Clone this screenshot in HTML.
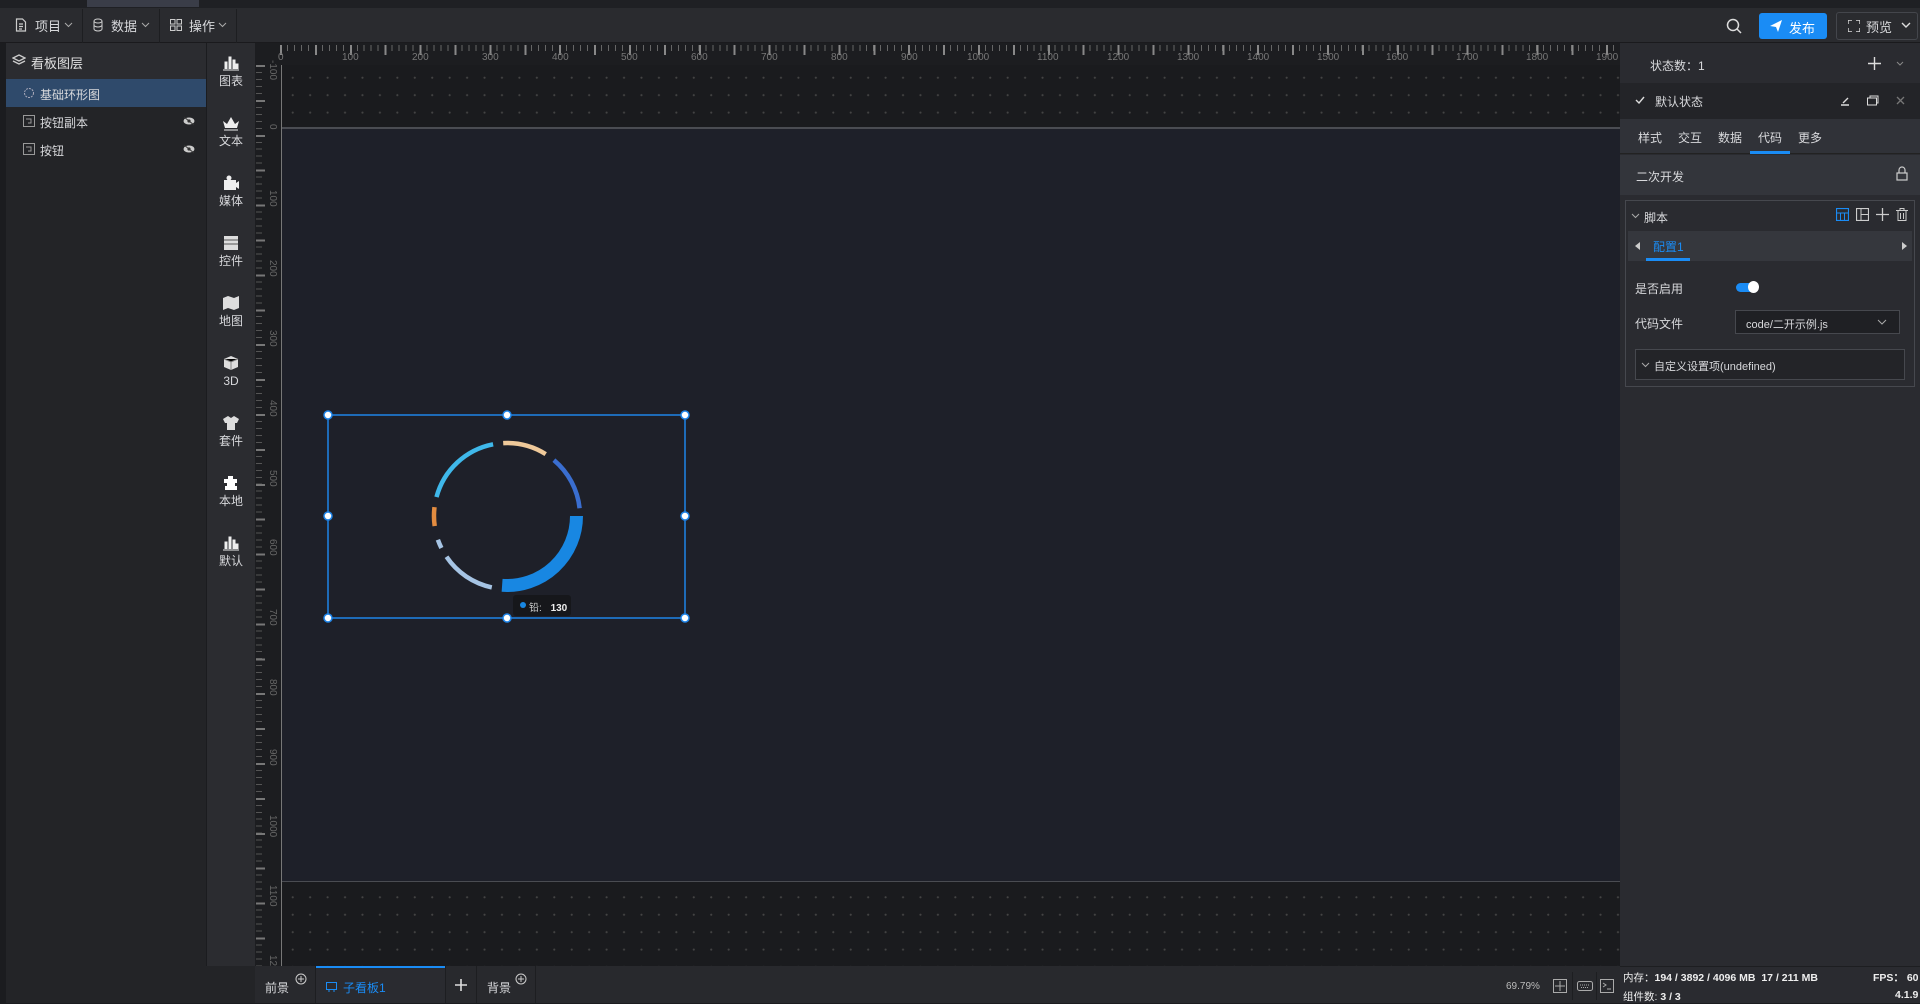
<!DOCTYPE html>
<html><head><meta charset="utf-8"><style>
*{margin:0;padding:0;box-sizing:border-box}
body{width:1920px;height:1003px;background:#1b1c1f;font-family:"Liberation Sans","Noto Sans CJK SC",sans-serif;color:#d8d9dc;font-size:12px;position:relative;overflow:hidden}
.a{position:absolute}
.t{white-space:nowrap}
.vl{position:absolute;left:263px;font-size:10px;color:#666;transform:rotate(90deg);transform-origin:left top;white-space:nowrap}
</style></head><body>
<div class="a" style="left:0;top:0;width:1920px;height:8px;background:#1f2024"></div>
<div class="a" style="left:87px;top:0;width:112px;height:7px;background:#3a3d48"></div>
<div class="a" style="left:0;top:8px;width:1920px;height:35px;background:#2a2b2f;border-bottom:1px solid #1a1a1d"></div>
<div class="a" style="left:82px;top:9px;width:1px;height:34px;background:#1d1e21"></div>
<div class="a" style="left:159px;top:9px;width:1px;height:34px;background:#1d1e21"></div>
<div class="a" style="left:236px;top:9px;width:1px;height:34px;background:#1d1e21"></div>
<svg class="a" style="left:15px;top:18px" width="12" height="14" viewBox="0 0 12 14"><path d="M1.5 1h6l3 3v9h-9z M4 6h4 M4 8.5h4 M4 11h3" stroke="#ccc" fill="none" stroke-width="1.2"/></svg>
<div class="a t" style="left:35px;top:16px;font-size:13px">项目</div>
<svg class="a" style="left:64px;top:22px" width="9" height="6"><path d="M1 1l3.5 3.5L8 1" stroke="#aaa" fill="none"/></svg>
<svg class="a" style="left:93px;top:18px" width="10" height="14"><ellipse cx="5" cy="3" rx="4" ry="2" stroke="#ccc" fill="none"/><path d="M1 3v8c0 1 1.8 2 4 2s4-1 4-2V3 M1 7c0 1 1.8 2 4 2s4-1 4-2" stroke="#ccc" fill="none"/></svg>
<div class="a t" style="left:111px;top:16px;font-size:13px">数据</div>
<svg class="a" style="left:141px;top:22px" width="9" height="6"><path d="M1 1l3.5 3.5L8 1" stroke="#aaa" fill="none"/></svg>
<svg class="a" style="left:170px;top:19px" width="12" height="12"><rect x="0.5" y="0.5" width="4.5" height="4.5" stroke="#ccc" fill="none"/><rect x="7" y="0.5" width="4.5" height="4.5" stroke="#ccc" fill="none"/><rect x="0.5" y="7" width="4.5" height="4.5" stroke="#ccc" fill="none"/><rect x="7" y="7" width="4.5" height="4.5" stroke="#ccc" fill="none"/></svg>
<div class="a t" style="left:189px;top:16px;font-size:13px">操作</div>
<svg class="a" style="left:218px;top:22px" width="9" height="6"><path d="M1 1l3.5 3.5L8 1" stroke="#aaa" fill="none"/></svg>
<svg class="a" style="left:1726px;top:18px" width="16" height="16"><circle cx="7" cy="7" r="5.5" stroke="#ddd" stroke-width="1.5" fill="none"/><path d="M11 11l4 4" stroke="#ddd" stroke-width="1.5"/></svg>
<div class="a" style="left:1759px;top:13px;width:68px;height:26px;background:#1a8cf5;border-radius:3px"></div>
<svg class="a" style="left:1770px;top:20px" width="12" height="12"><path d="M0 6L12 0 8 12 6 7z" fill="#fff"/></svg>
<div class="a t" style="left:1789px;top:18px;font-size:13px;color:#fff">发布</div>
<div class="a" style="left:1836px;top:12px;width:82px;height:28px;border:1px solid #44464c;border-radius:3px"></div>
<svg class="a" style="left:1848px;top:20px" width="12" height="12"><path d="M0 4V0h4 M8 0h4v4 M12 8v4H8 M4 12H0V8" stroke="#ddd" fill="none" stroke-width="1.4"/></svg>
<div class="a t" style="left:1866px;top:17px;font-size:13px">预览</div>
<svg class="a" style="left:1901px;top:22px" width="10" height="6"><path d="M1 1l4 4 4-4" stroke="#ddd" fill="none" stroke-width="1.4"/></svg>

<div class="a" style="left:6px;top:43px;width:200px;height:960px;background:#232427"></div>
<div class="a" style="left:6px;top:43px;width:200px;height:36px;background:#2b2c30"></div>
<svg class="a" style="left:12px;top:54px" width="14" height="12"><path d="M7 1L13 4 7 7 1 4z M1 7l6 3 6-3" stroke="#ccc" fill="none" stroke-width="1.3"/></svg>
<div class="a t" style="left:31px;top:53px;font-size:13px;color:#e0e0e0">看板图层</div>
<div class="a" style="left:6px;top:79px;width:200px;height:28px;background:#2f4a6b"></div>
<svg class="a" style="left:23px;top:87px" width="12" height="12"><circle cx="6" cy="6" r="4.5" stroke="#aab" fill="none" stroke-dasharray="2 1"/></svg>
<div class="a t" style="left:40px;top:86px;font-size:12px">基础环形图</div>
<svg class="a" style="left:23px;top:115px" width="12" height="12"><rect x="0.5" y="0.5" width="11" height="11" stroke="#999" fill="none"/><path d="M3 4h5v4H5" stroke="#999" fill="none"/></svg>
<div class="a t" style="left:40px;top:114px;font-size:12px">按钮副本</div>
<svg class="a" style="left:183px;top:116px" width="12" height="10"><ellipse cx="6" cy="5" rx="5.5" ry="3.5" fill="#ccc"/><circle cx="6" cy="5" r="1.6" fill="#333"/><path d="M1 1l10 8" stroke="#333"/></svg>
<svg class="a" style="left:23px;top:143px" width="12" height="12"><rect x="0.5" y="0.5" width="11" height="11" stroke="#999" fill="none"/><path d="M3 4h5v4H5" stroke="#999" fill="none"/></svg>
<div class="a t" style="left:40px;top:142px;font-size:12px">按钮</div>
<svg class="a" style="left:183px;top:144px" width="12" height="10"><ellipse cx="6" cy="5" rx="5.5" ry="3.5" fill="#ccc"/><circle cx="6" cy="5" r="1.6" fill="#333"/><path d="M1 1l10 8" stroke="#333"/></svg>

<div class="a" style="left:207px;top:43px;width:48px;height:923px;background:#2b2c30"></div>
<div class="a" style="left:207px;top:55px;width:48px;text-align:center;font-size:12px;line-height:14px">
<div style="height:60px"><svg width="18" height="16"><path d="M1 15h16 M3 14V7h2v7 M7 14V2h2v12 M11 14V5h2v9 M14 14V9h2v5" stroke="#eee" fill="#eee"/></svg><br>图表</div>
<div style="height:60px"><svg width="18" height="16"><path d="M1 6l4 3 4-7 4 7 4-3-2 7H3z" fill="#eee"/><path d="M2 15h14" stroke="#eee"/></svg><br>文本</div>
<div style="height:60px"><svg width="18" height="16"><rect x="2" y="5" width="12" height="10" fill="#eee"/><circle cx="7" cy="3" r="2.5" fill="#eee"/><path d="M14 8l3-2v8l-3-2z" fill="#eee"/></svg><br>媒体</div>
<div style="height:60px"><svg width="18" height="16"><rect x="2" y="1" width="14" height="14" fill="#ddd"/><path d="M2 5h14 M2 9h14" stroke="#555"/></svg><br>控件</div>
<div style="height:60px"><svg width="18" height="16"><path d="M1 3l5-2 6 2 5-2v12l-5 2-6-2-5 2z" fill="#ddd"/></svg><br>地图</div>
<div style="height:60px"><svg width="18" height="16"><path d="M9 1l7 3v8l-7 3-7-3V4z" fill="#ddd"/><path d="M2 4l7 3 7-3 M9 7v8" stroke="#888"/></svg><br>3D</div>
<div style="height:60px"><svg width="18" height="16"><path d="M6 1l3 2 3-2 5 3-2 4h-2v7H5V8H3L1 4z" fill="#ddd"/></svg><br>套件</div>
<div style="height:60px"><svg width="18" height="16"><path d="M6 1h5v3h4v4h-2v3h2v4H3v-4h2V8H2V4h4z" fill="#fff"/></svg><br>本地</div>
<div style="height:60px"><svg width="18" height="16"><path d="M1 15h16 M3 14V7h2v7 M7 14V2h2v12 M11 14V5h2v9 M14 14V9h2v5" stroke="#eee" fill="#eee"/></svg><br>默认</div>
</div>

<div class="a" style="left:255px;top:43px;width:1365px;height:22px;background:#1c1d20"></div>
<div class="a" style="left:280px;top:45px;width:1340px;height:6px;background:repeating-linear-gradient(90deg,#666 0 1px,transparent 1px 6.979px)"></div>
<div class="a" style="left:280px;top:45px;width:1340px;height:10px;background:repeating-linear-gradient(90deg,#888 0 2px,transparent 2px 34.9px)"></div>
<div class="a" style="left:255px;top:65px;width:25px;height:901px;background:#1c1d20"></div>
<div class="a" style="left:256px;top:65px;width:6px;height:901px;background:repeating-linear-gradient(180deg,#555 0 1px,transparent 1px 6.979px)"></div>
<div class="a" style="left:256px;top:65px;width:9px;height:901px;background:repeating-linear-gradient(180deg,#777 0 2px,transparent 2px 34.9px)"></div>
<div class="vl" style="left:278px;top:60px">-100</div>
<div class="vl" style="left:278px;top:124px">0</div>
<div class="vl" style="left:278px;top:190px">100</div>
<div class="vl" style="left:278px;top:260px">200</div>
<div class="vl" style="left:278px;top:330px">300</div>
<div class="vl" style="left:278px;top:400px">400</div>
<div class="vl" style="left:278px;top:470px">500</div>
<div class="vl" style="left:278px;top:539px">600</div>
<div class="vl" style="left:278px;top:609px">700</div>
<div class="vl" style="left:278px;top:679px">800</div>
<div class="vl" style="left:278px;top:749px">900</div>
<div class="vl" style="left:278px;top:815px">1000</div>
<div class="vl" style="left:278px;top:885px">1100</div>
<div class="vl" style="left:278px;top:955px">1200</div>
<div class="a t" style="left:0;top:52px;width:1620px;font-size:10px;color:#777">
<span class="a" style="left:278px">0</span><span class="a" style="left:342px">100</span><span class="a" style="left:412px">200</span><span class="a" style="left:482px">300</span><span class="a" style="left:552px">400</span><span class="a" style="left:621px">500</span><span class="a" style="left:691px">600</span><span class="a" style="left:761px">700</span><span class="a" style="left:831px">800</span><span class="a" style="left:901px">900</span><span class="a" style="left:967px">1000</span><span class="a" style="left:1037px">1100</span><span class="a" style="left:1107px">1200</span><span class="a" style="left:1177px">1300</span><span class="a" style="left:1247px">1400</span><span class="a" style="left:1317px">1500</span><span class="a" style="left:1386px">1600</span><span class="a" style="left:1456px">1700</span><span class="a" style="left:1526px">1800</span><span class="a" style="left:1596px">1900</span>
</div>
<div class="a" style="left:280px;top:65px;width:1340px;height:901px;background-color:#1a1b1e;background-image:radial-gradient(circle,#444 0.9px,transparent 1.2px);background-size:17.45px 17.45px;background-position:4px 4px"></div>
<div class="a" style="left:281px;top:65px;width:1px;height:901px;background:#777"></div>
<div class="a" style="left:282px;top:127px;width:1338px;height:755px;background:#1e2029;border-top:2px solid #4a4c52;border-bottom:1px solid #4a4c52"></div>

<svg class="a" style="left:0;top:0" width="1620" height="966">
<g fill="none">
<path d="M503.2 443.1A73 73 0 0 1 545.7 454.1" stroke="#efc99a" stroke-width="4.5"/>
<path d="M553.9 460.1A73 73 0 0 1 579.6 508.3" stroke="#3a6ed0" stroke-width="4.5"/>
<path d="M576.5 516A69.5 69.5 0 0 1 502.1 585.3" stroke="#1887e2" stroke-width="13"/>
<path d="M491.8 587.4A73 73 0 0 1 446.5 556.8" stroke="#a6c4e4" stroke-width="4.5"/>
<path d="M441.4 548A73 73 0 0 1 437.9 539.8" stroke="#a6c4e4" stroke-width="4.5"/>
<path d="M434.7 526.1A73 73 0 0 1 434.5 507.1" stroke="#e38c40" stroke-width="4.5"/>
<path d="M436.5 497.1A73 73 0 0 1 493.1 444.3" stroke="#3fb8ea" stroke-width="4.5"/>
</g>
<rect x="328" y="415" width="357" height="203" stroke="#1e84e8" stroke-width="1.5" fill="none"/>
<g fill="#fff" stroke="#1e84e8" stroke-width="1.5">
<circle cx="328" cy="415" r="4"/><circle cx="507" cy="415" r="4"/><circle cx="685" cy="415" r="4"/>
<circle cx="328" cy="516" r="4"/><circle cx="685" cy="516" r="4"/>
<circle cx="328" cy="618" r="4"/><circle cx="507" cy="618" r="4"/><circle cx="685" cy="618" r="4"/>
</g>
</svg>
<div class="a" style="left:513px;top:595px;width:58px;height:21px;background:#16171b;border-radius:3px"></div>
<div class="a" style="left:520px;top:602px;width:6px;height:6px;border-radius:50%;background:#1887e2"></div>
<div class="a t" style="left:529px;top:599px;font-size:10px;color:#ccc">铅: <b style="color:#eee;margin-left:6px">130</b></div>

<div class="a" style="left:255px;top:966px;width:1365px;height:37px;background:#28292d"></div>
<div class="a" style="left:206px;top:966px;width:49px;height:37px;background:#232427"></div>
<div class="a" style="left:315px;top:966px;width:1px;height:37px;background:#1d1e21"></div>
<div class="a" style="left:316px;top:966px;width:130px;height:37px;background:#2a2b30;border-top:2px solid #1a8cf5"></div>
<div class="a" style="left:445px;top:966px;width:1px;height:37px;background:#1d1e21"></div>
<div class="a" style="left:476px;top:966px;width:1px;height:37px;background:#1d1e21"></div>
<div class="a" style="left:535px;top:966px;width:1px;height:37px;background:#1d1e21"></div>
<div class="a t" style="left:265px;top:979px;font-size:12px">前景</div>
<svg class="a" style="left:295px;top:973px" width="12" height="12"><circle cx="6" cy="6" r="5" stroke="#ccc" fill="none"/><path d="M6 3v6M3 6h6" stroke="#ccc"/></svg>
<svg class="a" style="left:326px;top:982px" width="11" height="10"><rect x="0.5" y="0.5" width="10" height="7" stroke="#1a8cf5" fill="none"/><path d="M3 8v2 M8 8v2" stroke="#1a8cf5"/></svg>
<div class="a t" style="left:343px;top:979px;font-size:12px;color:#1a8cf5">子看板1</div>
<svg class="a" style="left:455px;top:979px" width="12" height="12"><path d="M6 0v12M0 6h12" stroke="#ddd" stroke-width="1.6"/></svg>
<div class="a t" style="left:487px;top:979px;font-size:12px">背景</div>
<svg class="a" style="left:515px;top:973px" width="12" height="12"><circle cx="6" cy="6" r="5" stroke="#ccc" fill="none"/><path d="M6 3v6M3 6h6" stroke="#ccc"/></svg>
<div class="a t" style="left:1506px;top:981px;font-size:10px;color:#bbb">69.79%</div>
<svg class="a" style="left:1553px;top:979px" width="14" height="14"><rect x="0.5" y="0.5" width="13" height="13" stroke="#aaa" fill="none"/><path d="M7 2v10M2 7h10" stroke="#aaa"/></svg>
<div class="a" style="left:1572px;top:972px;width:1px;height:28px;background:#1d1e21"></div>
<svg class="a" style="left:1577px;top:981px" width="16" height="10"><rect x="0.5" y="0.5" width="15" height="9" rx="2" stroke="#aaa" fill="none"/><path d="M3 4h10M4 6.5h8" stroke="#aaa" stroke-dasharray="1 1"/></svg>
<div class="a" style="left:1596px;top:972px;width:1px;height:28px;background:#1d1e21"></div>
<svg class="a" style="left:1600px;top:979px" width="14" height="14"><rect x="0.5" y="0.5" width="13" height="13" stroke="#aaa" fill="none"/><path d="M3 4l3 2-3 2 M7 10h4" stroke="#aaa" fill="none"/></svg>

<div class="a" style="left:1620px;top:43px;width:300px;height:960px;background:#2a2b30"></div>
<div class="a t" style="left:1650px;top:57px;font-size:12px">状态数：1</div>
<svg class="a" style="left:1868px;top:57px" width="13" height="13"><path d="M6.5 0v13M0 6.5h13" stroke="#ddd" stroke-width="1.4"/></svg>
<svg class="a" style="left:1896px;top:61px" width="8" height="5"><path d="M1 1l3 3 3-3" stroke="#888" fill="none"/></svg>
<div class="a" style="left:1620px;top:83px;width:300px;height:36px;background:#232428"></div>
<svg class="a" style="left:1635px;top:96px" width="10" height="8"><path d="M1 4l3 3 5-6" stroke="#ddd" fill="none" stroke-width="1.4"/></svg>
<div class="a t" style="left:1655px;top:93px;font-size:12px">默认状态</div>
<svg class="a" style="left:1840px;top:96px" width="10" height="10"><path d="M1 9h8 M3 7l5-5" stroke="#ddd" stroke-width="1.4"/></svg>
<svg class="a" style="left:1867px;top:95px" width="12" height="11"><rect x="0.5" y="3" width="9" height="7" stroke="#ddd" fill="none"/><path d="M3 3V1h8v7H9.5" stroke="#ddd" fill="none"/></svg>
<svg class="a" style="left:1896px;top:96px" width="9" height="9"><path d="M1 1l7 7M8 1L1 8" stroke="#777" stroke-width="1.3"/></svg>
<div class="a" style="left:1620px;top:119px;width:300px;height:35px;background:#303238;border-bottom:1px solid #222"></div>
<div class="a t" style="left:1638px;top:129px;font-size:12px">样式</div>
<div class="a t" style="left:1678px;top:129px;font-size:12px">交互</div>
<div class="a t" style="left:1718px;top:129px;font-size:12px">数据</div>
<div class="a t" style="left:1758px;top:129px;font-size:12px">代码</div>
<div class="a t" style="left:1798px;top:129px;font-size:12px">更多</div>
<div class="a" style="left:1750px;top:151px;width:40px;height:3px;background:#1a8cf5"></div>
<div class="a" style="left:1620px;top:155px;width:300px;height:40px;background:#33353b"></div>
<div class="a t" style="left:1636px;top:168px;font-size:12px">二次开发</div>
<svg class="a" style="left:1896px;top:166px" width="12" height="15"><path d="M3 7V4a3 3 0 0 1 6 0v3" stroke="#ccc" fill="none" stroke-width="1.2"/><rect x="1" y="7" width="10" height="7" stroke="#ccc" fill="none" stroke-width="1.2"/></svg>
<div class="a" style="left:1625px;top:200px;width:290px;height:187px;border:1px solid #46484e"></div>
<svg class="a" style="left:1631px;top:213px" width="9" height="6"><path d="M1 1l3.5 3.5L8 1" stroke="#aaa" fill="none"/></svg>
<div class="a t" style="left:1644px;top:209px;font-size:12px">脚本</div>
<svg class="a" style="left:1836px;top:208px" width="13" height="13"><rect x="0.5" y="0.5" width="12" height="12" stroke="#1a8cf5" fill="none" stroke-width="1.2"/><path d="M1 5h11M4.5 5v7M8.5 5v7" stroke="#1a8cf5"/></svg>
<svg class="a" style="left:1856px;top:208px" width="13" height="13"><rect x="0.5" y="0.5" width="12" height="12" stroke="#ccc" fill="none" stroke-width="1.2"/><path d="M5 1v11M5 6.5h7" stroke="#ccc"/></svg>
<svg class="a" style="left:1876px;top:208px" width="13" height="13"><path d="M6.5 0v13M0 6.5h13" stroke="#ccc" stroke-width="1.3"/></svg>
<svg class="a" style="left:1896px;top:208px" width="12" height="13"><path d="M0 2.5h12 M4 2.5V.5h4v2 M2 3v9.5h8V3 M4.5 5v6M7.5 5v6" stroke="#ccc" fill="none"/></svg>
<div class="a" style="left:1628px;top:231px;width:284px;height:30px;background:#35373d"></div>
<svg class="a" style="left:1635px;top:242px" width="5" height="8"><path d="M5 0v8L0 4z" fill="#ccc"/></svg>
<svg class="a" style="left:1902px;top:242px" width="5" height="8"><path d="M0 0v8l5-4z" fill="#ccc"/></svg>
<div class="a t" style="left:1653px;top:238px;font-size:12px;color:#1a8cf5">配置1</div>
<div class="a" style="left:1646px;top:258px;width:44px;height:3px;background:#1a8cf5"></div>
<div class="a t" style="left:1635px;top:280px;font-size:12px">是否启用</div>
<div class="a" style="left:1736px;top:283px;width:22px;height:9px;border-radius:5px;background:#1a8cf5"></div>
<div class="a" style="left:1748px;top:281px;width:11px;height:12px;border-radius:50%;background:#fff"></div>
<div class="a t" style="left:1635px;top:315px;font-size:12px">代码文件</div>
<div class="a" style="left:1735px;top:310px;width:165px;height:24px;background:#1f2024;border:1px solid #46484e"></div>
<div class="a t" style="left:1746px;top:316px;font-size:11px">code/二开示例.js</div>
<svg class="a" style="left:1877px;top:319px" width="10" height="6"><path d="M1 1l4 4 4-4" stroke="#aaa" fill="none"/></svg>
<div class="a" style="left:1635px;top:349px;width:270px;height:31px;background:#232428;border:1px solid #46484e"></div>
<svg class="a" style="left:1641px;top:362px" width="9" height="6"><path d="M1 1l3.5 3.5L8 1" stroke="#aaa" fill="none"/></svg>
<div class="a t" style="left:1654px;top:358px;font-size:11px">自定义设置项(undefined)</div>
<div class="a" style="left:1620px;top:966px;width:300px;height:1px;background:#1d1e21"></div>
<div class="a t" style="left:1623px;top:970px;font-size:10.5px;color:#eee">内存：<b>194 / 3892 / 4096 MB&nbsp; 17 / 211 MB</b></div>
<div class="a t" style="left:1873px;top:970px;font-size:10.5px;color:#eee"><b>FPS： 60</b></div>
<div class="a t" style="left:1623px;top:989px;font-size:10.5px;color:#eee">组件数: <b>3 / 3</b></div>
<div class="a t" style="left:1895px;top:989px;font-size:10.5px;color:#eee"><b>4.1.9</b></div>
</body></html>
